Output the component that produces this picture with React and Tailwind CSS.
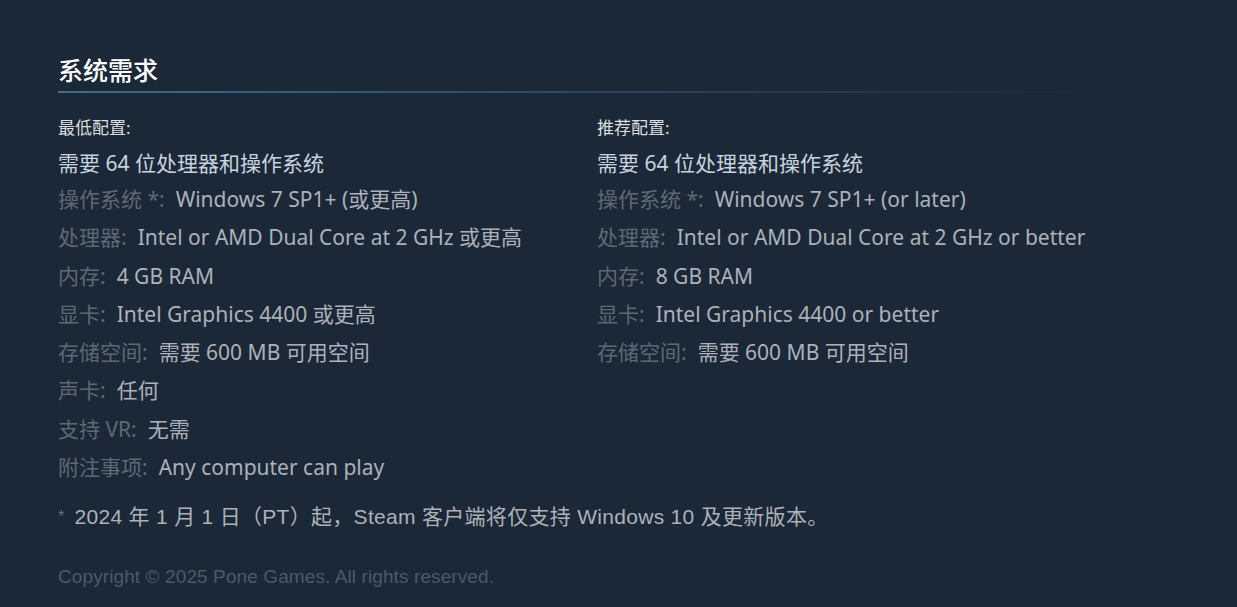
import React from 'react';

const minReq = [
  ["操作系统 *:", "Windows 7 SP1+ (或更高)"],
  ["处理器:", "Intel or AMD Dual Core at 2 GHz 或更高"],
  ["内存:", "4 GB RAM"],
  ["显卡:", "Intel Graphics 4400 或更高"],
  ["存储空间:", "需要 600 MB 可用空间"],
  ["声卡:", "任何"],
  ["支持 VR:", "无需"],
  ["附注事项:", "Any computer can play"],
];

const recReq = [
  ["操作系统 *:", "Windows 7 SP1+ (or later)"],
  ["处理器:", "Intel or AMD Dual Core at 2 GHz or better"],
  ["内存:", "8 GB RAM"],
  ["显卡:", "Intel Graphics 4400 or better"],
  ["存储空间:", "需要 600 MB 可用空间"],
];

const Column = ({ title, rows }) => {
  return (
    <div className="w-[539px] shrink-0">
      <div className="text-[17px] leading-[24px] text-[#dcdedf]">{title}</div>
      <div className="mt-[9px] text-[21px] leading-[28px] text-[#c6d4df]">需要 64 位处理器和操作系统</div>
      <div className="mt-[3px]">
        {rows.map(([label, value]) => (
          <div key={label} className="text-[21px] leading-[38.3px] whitespace-nowrap">
            <span className="text-[#5e6873]">{label}</span>
            <span className="text-[#acb2b8] ml-[11px]">{value}</span>
          </div>
        ))}
      </div>
    </div>
  );
};

export default function App() {
  return (
    <div className="min-h-[607px] bg-[#1b2838] pl-[58px] pt-[53px]" style={{ fontFamily: '"Noto Sans", "Noto Sans CJK SC", sans-serif' }}>
      <h2 className="text-[25px] leading-[34px] text-white font-medium">系统需求</h2>
      <div className="h-[2px] w-[1030px] mt-[4px] bg-gradient-to-r from-[#3b6e8c] via-[#2a4a63] to-transparent"></div>
      <div className="flex mt-[23px]">
        <Column title="最低配置:" rows={minReq} />
        <Column title="推荐配置:" rows={recReq} />
      </div>
      <div className="mt-[16px] text-[21px] leading-[30px] text-[#acb2b8] whitespace-nowrap tracking-[0.3px]" style={{ fontFamily: '"Liberation Sans", "Noto Sans CJK SC", sans-serif' }}>
        <span className="text-[#626b74] text-[16px] align-top mr-[10px]">*</span>2024 年 1 月 1 日（PT）起，Steam 客户端将仅支持 Windows 10 及更新版本。
      </div>
      <div className="mt-[34px] text-[19px] leading-[22px] text-[#4b5967] tracking-[0.1px]" style={{ fontFamily: '"Liberation Sans", Arial, sans-serif' }}>
        Copyright © 2025 Pone Games. All rights reserved.
      </div>
    </div>
  );
}
